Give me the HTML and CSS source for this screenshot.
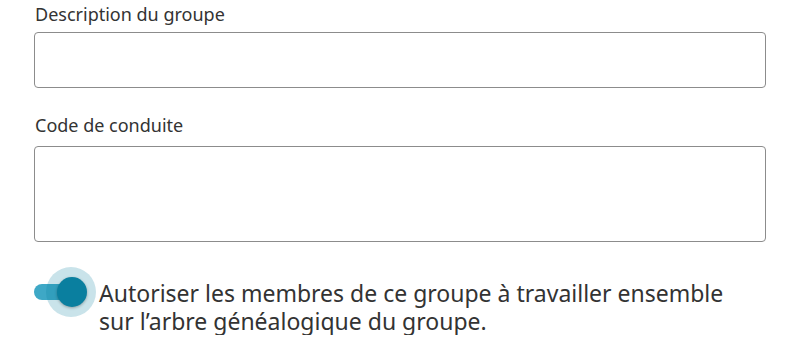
FILE: index.html
```html
<!DOCTYPE html>
<html lang="fr">
<head>
<meta charset="utf-8">
<link rel="stylesheet" href="styles.css">
</head>
<body>
<form class="form">
  <div class="field field-desc">
    <label class="label" for="desc">Description du groupe</label>
    <textarea id="desc" class="input input-short"></textarea>
  </div>
  <div class="field field-code">
    <label class="label" for="code">Code de conduite</label>
    <textarea id="code" class="input input-tall"></textarea>
  </div>
  <div class="toggle-row">
    <span class="switch">
      <span class="track"></span>
      <span class="halo"></span>
      <span class="knob"></span>
    </span>
    <span class="toggle-text">Autoriser les membres de ce groupe à travailler ensemble sur l’arbre généalogique du groupe.</span>
  </div>
</form>
</body>
</html>
```

FILE: styles.css
```css
* { box-sizing: border-box; }
html, body { margin: 0; background: #fff; }
body {
  font-family: "Noto Sans", "Open Sans", sans-serif;
  color: #333;
}
.form {
  padding: 2px 34px 0 34px;
  display: flex;
  flex-direction: column;
}
.field {
  display: flex;
  flex-direction: column;
}
.field-desc { margin-bottom: 25px; }
.label {
  font-size: 18px;
  line-height: 24px;
  margin-bottom: 6px;
  padding-left: 1px;
  color: #333;
}
.field-code .label { margin-bottom: 9px; }
.input {
  display: block;
  width: 100%;
  border: 1px solid #8c8c8c;
  border-radius: 4px;
  resize: none;
  font: inherit;
  padding: 8px 12px;
  background: #fff;
}
.input-short { height: 56px; }
.input-tall { height: 96px; }
.toggle-row {
  display: flex;
  align-items: flex-start;
  gap: 12px;
  margin-top: 37px;
}
.switch {
  position: relative;
  flex: none;
  width: 53px;
  height: 30px;
  margin-top: -2px;
}
.track {
  position: absolute;
  left: 0;
  top: 7px;
  width: 50px;
  height: 16px;
  border-radius: 8px;
  background: #3ea8c6;
}
.halo {
  position: absolute;
  left: 12px;
  top: -10px;
  width: 50px;
  height: 50px;
  border-radius: 50%;
  background: rgba(10, 127, 160, 0.22);
}
.knob {
  position: absolute;
  left: 23px;
  top: 0;
  width: 30px;
  height: 30px;
  border-radius: 50%;
  background: #0a7f9f;
  box-shadow: 0 1px 3px rgba(0,0,0,0.3);
}
.toggle-text {
  font-size: 23px;
  line-height: 28px;
  color: #333;
  max-width: 660px;
}
```
